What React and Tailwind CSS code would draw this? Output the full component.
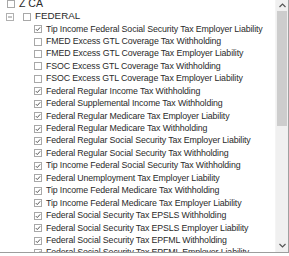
import React from 'react';

const items = [
  ['Tip Income Federal Social Security Tax Employer Liability', true],
  ['FMED Excess GTL Coverage Tax Withholding', false],
  ['FMED Excess GTL Coverage Tax Employer Liability', false],
  ['FSOC Excess GTL Coverage Tax Withholding', false],
  ['FSOC Excess GTL Coverage Tax Employer Liability', false],
  ['Federal Regular Income Tax Withholding', true],
  ['Federal Supplemental Income Tax Withholding', true],
  ['Federal Regular Medicare Tax Employer Liability', true],
  ['Federal Regular Medicare Tax Withholding', true],
  ['Federal Regular Social Security Tax Employer Liability', true],
  ['Federal Regular Social Security Tax Withholding', true],
  ['Tip Income Federal Social Security Tax Withholding', true],
  ['Federal Unemployment Tax Employer Liability', true],
  ['Tip Income Federal Medicare Tax Withholding', true],
  ['Tip Income Federal Medicare Tax Employer Liability', true],
  ['Federal Social Security Tax EPSLS Withholding', true],
  ['Federal Social Security Tax EPSLS Employer Liability', true],
  ['Federal Social Security Tax EPFML Withholding', true],
  ['Federal Social Security Tax EPFML Employer Liability', true],
];

const Box = ({ checked }) => (
  <svg width="8" height="8" viewBox="0 0 8 8" className="shrink-0">
    <rect x="0.5" y="0.5" width="7" height="7" fill="#fff" stroke="#a8a8a8" />
    {checked && <path d="M1.8 4.1 L3.3 5.6 L6.2 2.3" fill="none" stroke="#555" strokeWidth="1" />}
  </svg>
);

const Expander = () => (
  <svg width="8" height="8" viewBox="0 0 8 8" className="shrink-0">
    <rect x="0.5" y="0.5" width="7" height="7" fill="#fff" stroke="#b0b0b0" />
    <path d="M2 4 H6" stroke="#888" strokeWidth="1" />
  </svg>
);

const Row = ({ children, pl }) => (
  <div className={`h-[12.45px] flex items-center gap-[4px] whitespace-nowrap ${pl}`}>{children}</div>
);

export default function App() {
  return (
    <div className="w-[289px] h-[256px] bg-white overflow-hidden" style={{ fontFamily: '"Liberation Sans", Arial, sans-serif' }}>
      <div className="h-[253px] flex border-b border-[#9d9d9d]">
        <div className="flex-1 overflow-hidden text-[8.8px] tracking-[-0.12px] text-[#2a2a2a] -mt-[2px]">
          <Row pl="pl-[7px]">
            <Box />
            <span className="text-[10.5px] tracking-normal">Z CA</span>
          </Row>
          <Row pl="pl-[6px]">
            <Expander />
            <span className="w-[1px]" />
            <Box />
            <span className="text-[9.8px] tracking-normal">FEDERAL</span>
          </Row>
          {items.map(([label, checked], i) => (
            <Row key={i} pl="pl-[34px]">
              <Box checked={checked} />
              <span>{label}</span>
            </Row>
          ))}
        </div>
        <div className="w-[14px] flex flex-col bg-[#f0f0f0] border-l border-[#f4f4f4] border-r border-r-[#a0a0a0]">
          <div className="h-[11px] flex items-center justify-center">
            <svg width="7" height="5" viewBox="0 0 7 5"><path d="M0.5 4 L3.5 1 L6.5 4" fill="none" stroke="#555" strokeWidth="1.2" /></svg>
          </div>
          <div className="mx-[1px] h-[115px] bg-[#cdcdcd]" />
          <div className="flex-1" />
          <div className="h-[14px] flex items-center justify-center">
            <svg width="7" height="5" viewBox="0 0 7 5"><path d="M0.5 1 L3.5 4 L6.5 1" fill="none" stroke="#555" strokeWidth="1.2" /></svg>
          </div>
        </div>
      </div>
    </div>
  );
}
